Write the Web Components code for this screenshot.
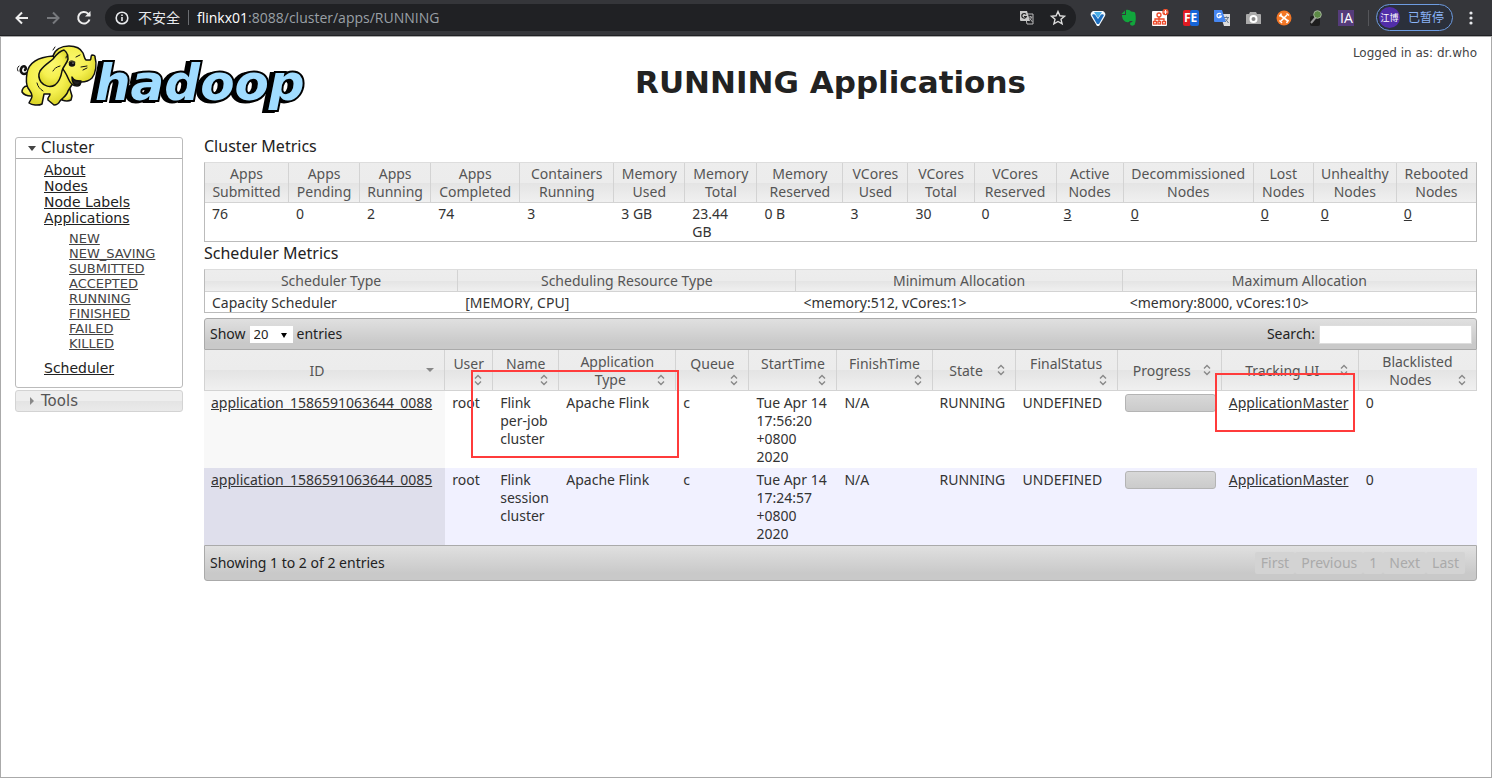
<!DOCTYPE html>
<html lang="en">
<head>
<meta charset="utf-8">
<title>RUNNING Applications</title>
<style>
  html, body { margin: 0; height: 100%; }
  body { font-family: "Noto Sans", "Noto Sans CJK SC", sans-serif; color: #333; background: #fff; }
</style>
</head>
<body>
<hadoop-page></hadoop-page>

<script>
const define = (name, css, html, init) => customElements.define(name, class extends HTMLElement {
  constructor() {
    super();
    this.attachShadow({ mode: 'open' }).innerHTML = `<style>*{box-sizing:border-box}${css}</style>${html}`;
  }
  connectedCallback() { if (init) init.call(this, this.shadowRoot); }
});

/* Browser toolbar */
define('browser-bar', `
  :host { display: flex; align-items: center; height: 36px; background: #35363a; border-bottom: 1px solid #202124; color: #e8eaed; font: 14px/20px "Open Sans","Noto Sans CJK SC",sans-serif; }
  button { all: unset; display: flex; align-items: center; justify-content: center; }
  .nav { width: 31px; height: 28px; }
  nav { display: flex; padding-left: 6px; }
  .omni { flex: 1; display: flex; align-items: center; height: 27px; margin-left: 6px; padding: 0 9px; border-radius: 14px; background: #202124; gap: 8px; }
  .url { flex: 1; color: #9aa0a6; }
  .url b { font-weight: 400; color: #fff; }
  .sep { width: 1px; height: 15px; background: #6b6d71; }
  .safe { color: #e8eaed; }
  .right { display: flex; gap: 13px; }
  .ext { display: flex; align-items: center; gap: 13px; padding: 0 7px 0 13px; }
  .ext button { width: 18px; height: 18px; }
  .line { width: 1px; height: 16px; background: #55565a; }
  .who { height: 25px; border: 1px solid #6d9be0; border-radius: 14px; padding: 0 8px 0 2px; gap: 8px; color: #8ab4f8; font-size: 12px; background: #2b303b; }
  .who span { display: flex; align-items: center; justify-content: center; width: 21px; height: 21px; border-radius: 50%; background: #512da8; color: #fff; font-size: 9px; }
  .dots { width: 36px; height: 28px; margin-right: 3px; }
`, `
  <nav>
    <button class="nav" aria-label="Back"><svg width="16" height="16" fill="none" stroke="#eee" stroke-width="2"><path d="M14 8H3M8 2.500L2.500 8L8 13.500"/></svg></button>
    <button class="nav" aria-label="Forward"><svg width="16" height="16" fill="none" stroke="#77797d" stroke-width="2"><path d="M2 8H13M8 2.500L13.500 8L8 13.500"/></svg></button>
    <button class="nav" aria-label="Reload"><svg width="16" height="16" fill="none" stroke="#eee" stroke-width="2"><path d="M13.500 9.500A5.800 5.800 0 1 1 12 3.600L14 5.600"/><path d="M14.500 1v5.500H9z" fill="#eee" stroke="none"/></svg></button>
  </nav>
  <div class="omni">
    <svg width="16" height="16" fill="none" stroke="#e8eaed" stroke-width="1.600"><circle cx="8" cy="8" r="5.800"/><path d="M8 7v4M8 4.500v1.500"/></svg>
    <span class="safe">不安全</span><span class="sep"></span>
    <span class="url"><b>flinkx01</b>:8088/cluster/apps/RUNNING</span>
    <span class="right">
      <svg width="18" height="18"><path d="M7 5h8v10H9z" fill="none" stroke="#bbb"/><path d="M2 2h7l3 10H3a1 1 0 0 1-1-1z" fill="#c8c8c8"/><path d="M8 5.500a2.300 2.300 0 1 0 .3 2H6" fill="none" stroke="#222" stroke-width="1.200"/><path d="M10.500 8h4M12.500 7v1M13.500 8c-.5 2-1 3-2.500 4M11.500 9l3 4" fill="none" stroke="#aaa"/></svg>
      <svg width="18" height="18" fill="none" stroke="#ddd" stroke-width="1.400"><path d="M9 2.500l1.900 4.300 4.600.4-3.500 3.100 1.100 4.600L9 12.500l-4.100 2.400L6 10.300 2.500 7.200l4.600-.4z"/></svg>
    </span>
  </div>
  <div class="ext">
    <button aria-label="V"><svg width="18" height="18"><path d="M4 2h10c2 1 3 3 2 5l-6 10H8L2 7C1 5 2 3 4 2z" fill="#f2f8fc"/><path d="M3 6c1-1 3-1 4 1l2 3 2-3c1-2 3-2 4-1l-5 9H8z" fill="#1d6fc0"/><path d="M5 3h8l-4 6z" fill="#49aee8"/></svg></button>
    <button aria-label="Evernote"><svg width="18" height="18" fill="#11a63c"><path d="M6 1c3-.5 4 .5 5 1.500 3 .2 4 .5 4.300 2 .8 4 .7 8-.6 11-.6 1.400-4 1.600-4.500 0-.4-2 .5-2.700 2.500-2.500-.6-1.300-2-.8-3.200-.7-.4 1-1.500 1-3 .7C3.500 12.500 2 9 2 6h4z"/><path d="M5 1.500V5H1.500z"/></svg></button>
    <button aria-label="Site map"><svg width="18" height="18"><rect x="1" y="2" width="15" height="15" rx="1" fill="#fff"/><g fill="none" stroke="#ee4b2b" stroke-width="1.300"><circle cx="8" cy="6" r="2"/><path d="M8 8v5M4 13v-3h9v3"/><rect x="2.500" y="12.500" width="3" height="2.500"/><rect x="7" y="12.500" width="2.500" height="2.500"/><rect x="11.500" y="12.500" width="3" height="2.500"/></g><circle cx="14.500" cy="3" r="3.200" fill="#f0512f"/><path d="M14.500 1v4M12.500 3h4" stroke="#fff"/></svg></button>
    <button aria-label="FE"><svg width="18" height="18"><rect x="1" y="1" width="8" height="16" rx="2" fill="#e11b22"/><rect x="8" y="1" width="9" height="16" rx="2" fill="#1565d8"/><text x="2" y="13" font-family="Open Sans" font-weight="700" font-size="12" fill="#fff">FE</text></svg></button>
    <button aria-label="Translate"><svg width="18" height="18"><path d="M7 5h10v12h-6z" fill="#ddd"/><path d="M1 1h8l4 12H2a1 1 0 0 1-1-1z" fill="#4687f1"/><path d="M8 5.200a2.200 2.200 0 1 0 .3 2H6" fill="none" stroke="#fff" stroke-width="1.200"/><path d="M11 8.500h5M13.500 7.500v1M15 9c-1 2-2 3-3 4M12.500 10l3 4" fill="none" stroke="#678"/></svg></button>
    <button aria-label="Camera"><svg width="18" height="18"><path d="M6 3h6l1 2h3a1 1 0 0 1 1 1v9H2V6a1 1 0 0 1 1-1h2z" fill="#aaa"/><circle cx="9.500" cy="10" r="3" fill="#888" stroke="#fff" stroke-width="2"/></svg></button>
    <button aria-label="Drone"><svg width="18" height="18"><circle cx="9" cy="9" r="7.500" fill="#f37726"/><path d="M5 6l8 6M6 12l6-6" stroke="#fff" stroke-width="1.600"/><path d="M4.500 7.500l2-3M11.500 4.500l2.500 2M4.500 11.500l2.500 2.500M11.500 14l2-3" stroke="#fff" stroke-width="1.400"/></svg></button>
    <button aria-label="Inspector"><svg width="18" height="18"><rect x="4" y="7" width="10" height="10" rx="2" fill="#1d1d1d"/><path d="M5 14l5-6" stroke="#999" stroke-width="2"/><circle cx="11.500" cy="5.500" r="3.800" fill="#5c8a45" stroke="#a5b59c"/></svg></button>
    <button aria-label="IA"><svg width="18" height="18"><rect x="1" y="1" width="16" height="16" fill="#553c7b"/><text x="3" y="14" font-family="Open Sans" font-size="14" fill="#fff">IA</text></svg></button>
    <span class="line"></span>
  </div>
  <button class="who"><span>江博</span>已暂停</button>
  <button class="dots" aria-label="Menu"><svg width="4" height="16" fill="#e8eaed"><circle cx="2" cy="3" r="1.600"/><circle cx="2" cy="8" r="1.600"/><circle cx="2" cy="13" r="1.600"/></svg></button>
`);

/* Elephant and wordmark */
define('hadoop-logo', `
  :host { display: block; width: 300px; }
  svg { display: block; overflow: visible; }
  text { font: italic 700 50px "DejaVu Sans", sans-serif; paint-order: stroke; stroke-linejoin: miter; filter: drop-shadow(-4px 1px 0 #000); }
`, `
  <svg width="300" height="76" viewBox="0 0 300 76" role="img" aria-label="hadoop">
    <defs><radialGradient id="y" cx="45%" cy="40%" r="60%"><stop offset="0" stop-color="#fbf871"/><stop offset="0.600" stop-color="#f5f050"/><stop offset="1" stop-color="#dcd62a"/></radialGradient></defs>
    <text x="80" y="61" fill="#a0dcff" stroke="#000" stroke-width="4">hadoop</text>
    <g fill="url(#y)" stroke="#111" stroke-width="1.500" stroke-linejoin="round" stroke-linecap="round">
      <path d="M12 34C7 37 4 32 7 28c3-2 5 1 3 3" fill="none" stroke-width="2.500"/>
      <path d="M12 47c-3 0-5 3-5 6 2 3 6 4 9 4l6-4z"/>
      <path d="M47 52v9c3 1 7 1 9 0l1-4-3-10z"/>
      <path d="M38 17C24 18 14 23 12 34c-1 6-1 11 1 15 2 3 4 5 4 8 0 3-2 4-3 7 3 2 9 3 13 1l2-10h6c0 3-3 3-2 6l6 5c3 0 5-2 6-4 2-3 7-5 8-10l5-8-4-24z"/>
      <path d="M38 17c2-6 8-10 16-10 7 0 12 3 14 7 1 2 1 5 3 7h4c2-1 0-4 2-5 2 0 3 0 3 2 2 7 1 16-3 21-3 3-7 4-11 4-1 3-1 4-4 4-5 0-7-3-9-8-3-8-9-14-15-22z"/>
      <path d="M49 11c-5 1-8 5-11 9-3 3-9 6-13 12-2 4-1 8 1 11 3 4 9 6 14 3 4-3 6-8 7-14 1-5 5-7 6-12 0-4-1-7-4-9z"/>
      <path d="M57 38c2 4 5 4 9 4-1 3-2 4-4 4-3 0-5-3-5-8z" fill="#222"/>
      <ellipse cx="57" cy="25" rx="2.500" ry="2" fill="#111"/><circle cx="58" cy="24" r=".600" fill="#fff" stroke="none"/>
      <path d="M51 19c0-2 1-3 2-3M61 18l4-2M54 23c2-2 4-1 6 0M66 28l6-1M68 31l4-2M45 27c-4 1-6 3-7 5M40 13l3-3M38 11l2-3M3 32c-1-2-1-3 1-5M22 44c1 4 3 6 6 8" fill="none" stroke-width="1"/>
    </g>
  </svg>
`);

/* Left navigation */
define('side-nav', `
  :host { display: block; padding-top: 2px; color: #222; font: 15px/20px "DejaVu Sans", sans-serif; }
  section { border: 1px solid #bbb; border-radius: 3px; }
  h3 { margin: 0; font-size: 15px; line-height: 20px; font-weight: 400; padding-left: 12px; display: flex; align-items: center; gap: 5px; }
  section h3 { border-bottom: 1px solid #aaa; }
  a { color: inherit; }
  ul { list-style: none; margin: 0; padding: 0; }
  .main { padding: 3px 0 9px 28px; font-size: 14px; line-height: 16px; }
  .sub { padding: 5px 0 7px 25px; font-size: 13px; line-height: 15px; color: #444; }
  .last { line-height: 20px; }
  .tools { margin-top: 2px; border: 1px solid #d3d3d3; border-radius: 3px; background: linear-gradient(#eee 50%, #e4e4e4 51%, #eaeaea); color: #555; }
`, `
  <section>
    <h3><svg width="8" height="5"><path d="M0 0h8L4 5z" fill="#444"/></svg>Cluster</h3>
    <ul class="main">
      <li><a href="#about">About</a></li><li><a href="#nodes">Nodes</a></li><li><a href="#labels">Node Labels</a></li>
      <li><a href="#apps">Applications</a>
        <ul class="sub"><li><a href="#n">NEW</a></li><li><a href="#ns">NEW_SAVING</a></li><li><a href="#s">SUBMITTED</a></li><li><a href="#a">ACCEPTED</a></li><li><a href="#r">RUNNING</a></li><li><a href="#f">FINISHED</a></li><li><a href="#fa">FAILED</a></li><li><a href="#k">KILLED</a></li></ul></li>
      <li class="last"><a href="#scheduler">Scheduler</a></li>
    </ul>
  </section>
  <h3 class="tools"><svg width="8" height="8"><path d="M2 0v8l4-4z" fill="#888"/></svg>Tools</h3>
`);

const head = 'linear-gradient(#ededed, #ececec 50%, #e4e4e4 51%, #f0f0f0)';

/* Static metrics table; columns are "width|heading|value", a leading * marks a link */
define('metrics-table', `
  :host { display: block; }
  h3 { margin: 0; font-size: 16px; line-height: 22px; font-weight: 400; color: #222; padding-bottom: 5px; }
  table { width: 100%; table-layout: fixed; border-collapse: separate; border-spacing: 0; border: 1px solid #bbb; border-top-color: #ddd; font-size: 14px; line-height: 18px; }
  th { font-weight: 400; color: #555; padding: 2px 0 1px; background: ${head}; border-right: 1px solid #d3d3d3; border-bottom: 1px solid #d3d3d3; }
  th:last-child { border-right: 0; }
  td { vertical-align: top; padding: 2px 7px 0; }
  a { color: inherit; }
`, `<h3></h3><table><colgroup></colgroup><thead><tr></tr></thead><tbody><tr></tr></tbody></table>`, function (r) {
  const cols = this.getAttribute('columns').split(';').map(c => c.split('|'));
  r.querySelector('h3').textContent = this.getAttribute('heading');
  const esc = s => s.replace(/</g, '&lt;');
  r.querySelector('colgroup').innerHTML = cols.map(c => `<col style="width:${c[0]}px">`).join('');
  r.querySelector('thead tr').innerHTML = cols.map(c => `<th>${c[1].replace('/', '<br>')}</th>`).join('');
  r.querySelector('tbody tr').innerHTML = cols.map(c => `<td>${c[2][0] === '*' ? `<a href="#nodes">${c[2].slice(1)}</a>` : esc(c[2])}</td>`).join('');
});

/* Sort arrows */
define('sort-mark', `
  :host { display: inline-block; width: 8px; height: 12px; }
  svg { display: block; }
`, `<svg width="8" height="12" fill="none" stroke="#888" stroke-width="1.400"></svg>`, function (r) {
  r.querySelector('svg').innerHTML = this.hasAttribute('down')
    ? '<path d="M0 4h8L4 8z" fill="#888" stroke="none"/>'
    : '<path d="M1 4.500L4 1.500 7 4.500M1 7.500L4 10.500 7 7.500"/>';
});

/* Applications grid */
const headings = [[241, 'ID', 'mid'], [48, 'User', 'low'], [66, 'Name', 'low'], [117, 'Application<br>Type', 'two'], [73, 'Queue', 'low'], [88, 'StartTime', 'low'], [95, 'FinishTime', 'low'], [83, 'State', 'mid'], [102, 'FinalStatus', 'low'], [104, 'Progress', 'mid'], [137, 'Tracking UI', 'mid'], [118, 'Blacklisted<br>Nodes', 'two']];
const row = (id, name, time) => `<tr><td><a href="#${id}">application_1586591063644_${id}</a></td><td>root</td><td>${name}</td><td>Apache Flink</td><td>c</td><td>${time}</td><td>N/A</td><td>RUNNING</td><td>UNDEFINED</td><td><div class="bar" role="progressbar" aria-label="Progress"></div></td><td><a href="#am${id}">ApplicationMaster</a></td><td>0</td></tr>`;
define('apps-grid', `
  :host { display: block; position: relative; font-size: 14px; line-height: 18px; }
  .tool { display: flex; align-items: center; justify-content: space-between; height: 32px; padding: 0 4px 0 5px; border: 1px solid #aaa; border-radius: 3px 3px 0 0; background: linear-gradient(#e0e0e0, #c9c9c9 80%); color: #222; }
  .foot { height: 36px; border-radius: 0 0 3px 3px; padding-right: 11px; }
  label { display: flex; align-items: center; gap: 4px; }
  .pick { display: flex; position: relative; }
  .pick svg { position: absolute; right: 6px; top: 7px; pointer-events: none; }
  select { appearance: none; border: 0; border-radius: 0; background: #fff; width: 43px; height: 17px; padding: 0 4px; font: 13px/17px "Noto Sans", sans-serif; color: #222; }
  input { border: 1px solid #ddd; background: #fff; width: 153px; height: 19px; margin: 0; padding: 0 2px; }
  table { width: 100%; table-layout: fixed; border-collapse: separate; border-spacing: 0; }
  th { position: relative; height: 41px; font-weight: 400; color: #555; padding: 0; background: ${head}; border-right: 1px solid #d3d3d3; border-bottom: 1px solid #d3d3d3; }
  th:first-child { border-left: 1px solid #d3d3d3; }
  .mid, .two { padding: 2px 15px 0 0; }
  .two { padding-right: 0; }
  .two::after { content: ""; display: inline-block; width: 14px; }
  .low { vertical-align: top; padding-top: 5px; }
  sort-mark { position: absolute; right: 10px; top: 14px; }
  .low sort-mark, .two sort-mark { top: 24px; }
  td { vertical-align: top; padding: 3px 0 0 7px; height: 77px; white-space: nowrap; }
  td:first-child { background: #f8f8f8; }
  tbody tr + tr { background: #f1f1ff; }
  tbody tr + tr td:first-child { background: #dfdfec; }
  a { color: inherit; }
  .bar { width: 91px; height: 18px; border: 1px solid #b4b4b4; border-radius: 3px; background: linear-gradient(#d8d8d8, #cbcbcb); }
  .pages { display: flex; }
  .pages button { all: unset; padding: 0 6px; line-height: 22px; color: #aaa; border-radius: 2px; background: #d3d3d3; }
  .mark { position: absolute; border: 2px solid #ff3b3b; pointer-events: none; }
  .m1 { left: 267px; top: 52px; width: 208px; height: 88px; }
  .m2 { right: 122px; top: 55px; width: 140px; height: 59px; }
`, `
  <div class="tool"><label>Show <span class="pick"><select><option>20</option><option>50</option></select><svg width="6" height="5"><path d="M0 0h6L3 5z"/></svg></span> entries</label><label>Search: <input type="text"></label></div>
  <table><colgroup>${headings.map(h => `<col style="width:${h[0]}px">`).join('')}</colgroup>
  <thead><tr>${headings.map((h, i) => `<th class="${h[2]}">${h[1]}<sort-mark ${i ? '' : 'down'}></sort-mark></th>`).join('')}</tr></thead>
  <tbody>${row('0088', 'Flink<br>per-job<br>cluster', 'Tue Apr 14<br>17:56:20<br>+0800<br>2020')}${row('0085', 'Flink<br>session<br>cluster', 'Tue Apr 14<br>17:24:57<br>+0800<br>2020')}</tbody></table>
  <div class="tool foot"><span>Showing 1 to 2 of 2 entries</span><div class="pages"><button>First</button><button>Previous</button><button>1</button><button>Next</button><button>Last</button></div></div>
  <div class="mark m1"></div><div class="mark m2"></div>
`);

define('hadoop-page', `
  :host { display: flex; flex-direction: column; min-height: 100%; }
  main { flex: 1; border: 1px solid #aaa; padding: 0 14px; }
  header { display: grid; grid-template-columns: 300px 1fr 131px; height: 98px; }
  hadoop-logo { padding-top: 2px; }
  h1 { margin: 0; padding-top: 27px; text-align: center; font: 700 31px/37px "DejaVu Sans", sans-serif; color: #222; }
  .user { text-align: right; padding-top: 9px; font: 12px/14px "DejaVu Sans", sans-serif; color: #444; }
  .body { display: grid; grid-template-columns: 168px minmax(0, 1fr); gap: 21px; align-items: start; }
  .content { display: flex; flex-direction: column; }
  apps-grid { margin-top: 5px; }
`, `
  <browser-bar></browser-bar>
  <main>
    <header><hadoop-logo></hadoop-logo><h1>RUNNING Applications</h1><div class="user">Logged in as: dr.who</div></header>
    <div class="body">
      <side-nav></side-nav>
      <div class="content">
        <metrics-table heading="Cluster Metrics" columns="84|Apps/Submitted|76;71|Apps/Pending|0;71|Apps/Running|2;89|Apps/Completed|74;94|Containers/Running|3;71|Memory/Used|3 GB;72|Memory/Total|23.44 GB;86|Memory/Reserved|0 B;65|VCores/Used|3;66|VCores/Total|30;82|VCores/Reserved|0;67|Active/Nodes|*3;130|Decommissioned/Nodes|*0;60|Lost/Nodes|*0;83|Unhealthy/Nodes|*0;79|Rebooted/Nodes|*0"></metrics-table>
        <metrics-table heading="Scheduler Metrics" columns="253|Scheduler Type|Capacity Scheduler;338|Scheduling Resource Type|[MEMORY, CPU];326|Minimum Allocation|<memory:512, vCores:1>;353|Maximum Allocation|<memory:8000, vCores:10>"></metrics-table>
        <apps-grid></apps-grid>
      </div>
    </div>
  </main>
`);
</script>
</body>
</html>
